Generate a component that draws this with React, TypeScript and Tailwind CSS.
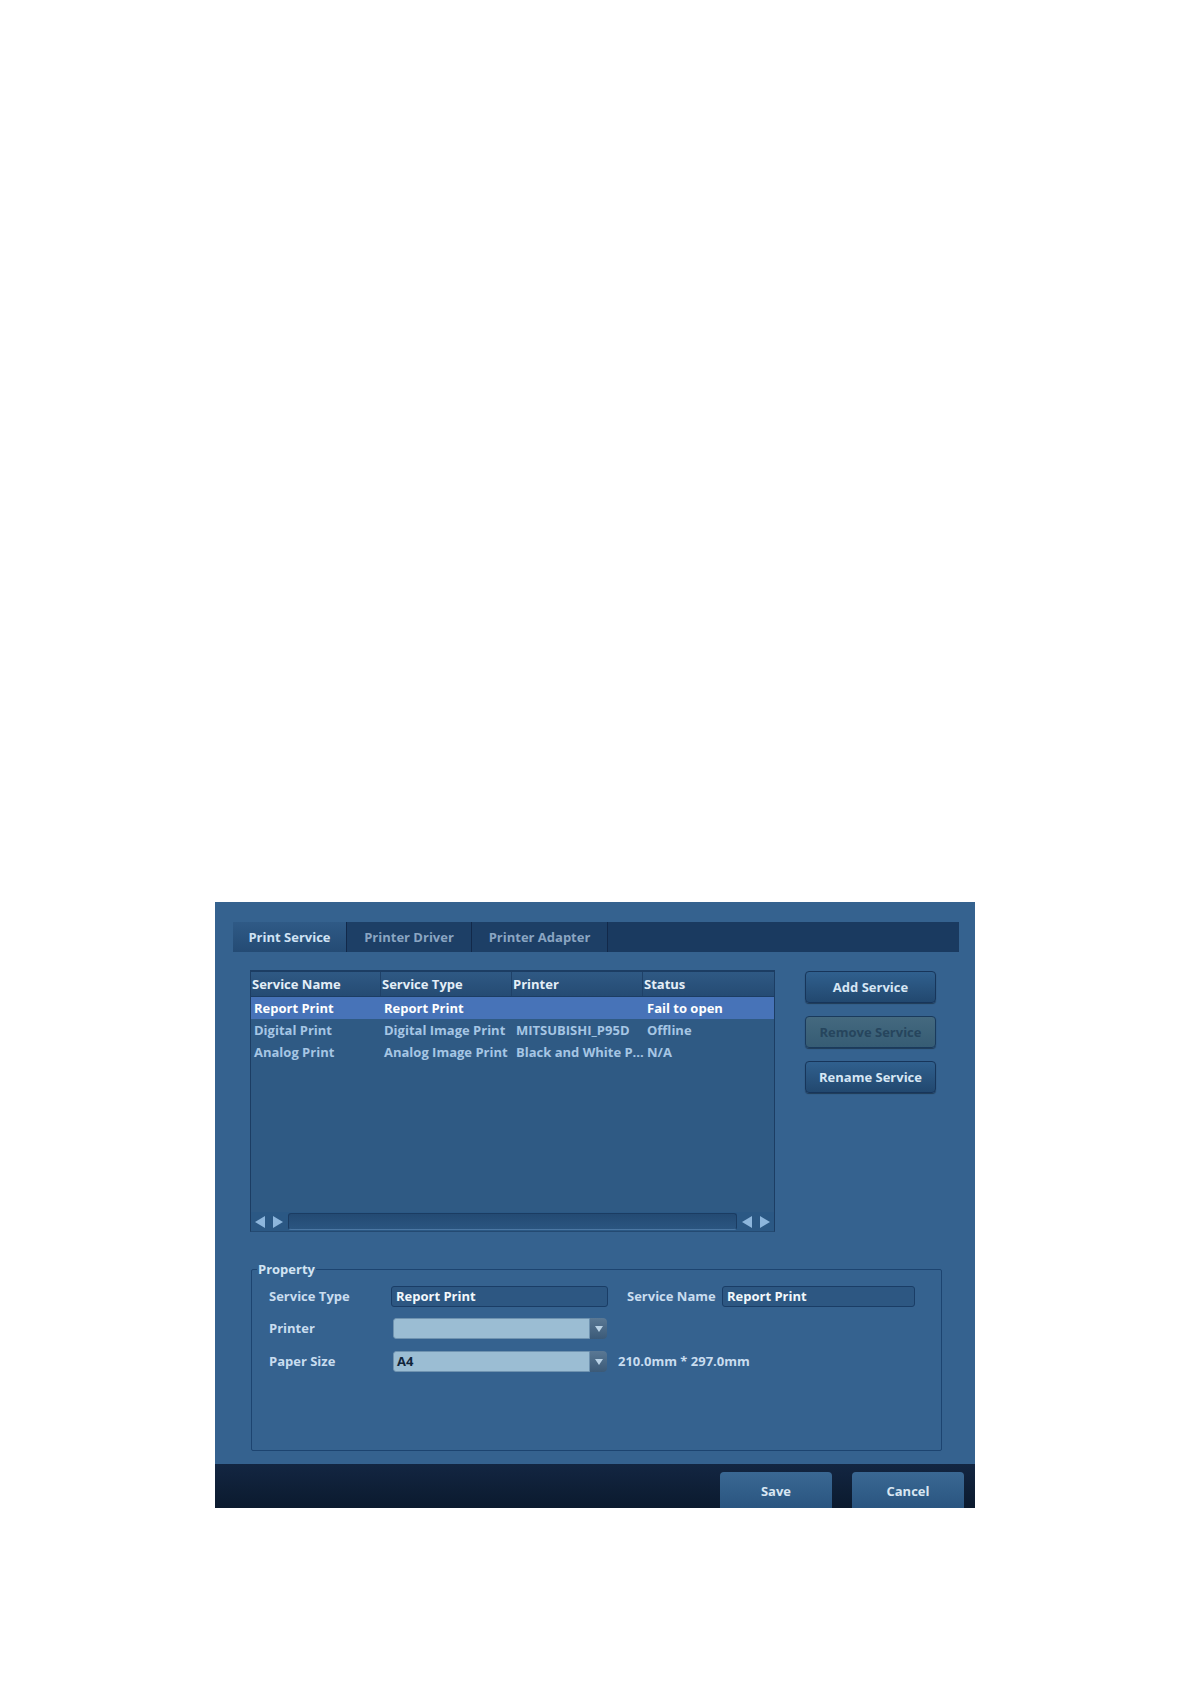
import React from "react";

const rows = [
  { name: "Report Print", type: "Report Print", printer: "", status: "Fail to open", selected: true },
  { name: "Digital Print", type: "Digital Image Print", printer: "MITSUBISHI_P95D", status: "Offline", selected: false },
  { name: "Analog Print", type: "Analog Image Print", printer: "Black and White P...", status: "N/A", selected: false },
];

const cols = ["w-[130px]", "w-[131px]", "w-[131px]", "flex-1"];

function ArrowPair() {
  return (
    <div className="flex items-center gap-[8px] px-[4px] h-full bg-[#2b5884]">
      <svg width="10" height="12" viewBox="0 0 10 12">
        <path d="M10 0 L0 6 L10 12 Z" fill="#8db6dc" />
      </svg>
      <svg width="10" height="12" viewBox="0 0 10 12">
        <path d="M0 0 L10 6 L0 12 Z" fill="#8db6dc" />
      </svg>
    </div>
  );
}

function ComboBox({ value }: { value: string }) {
  return (
    <div className="flex ml-[2px] w-[214px] h-[21px] rounded-[3px] overflow-hidden">
      <div className="flex-1 bg-[#9bbdd3] flex items-center pl-[3px] text-[#10243a] text-[13px] font-bold border border-[#6f93b0] rounded-l-[3px]">
        {value}
      </div>
      <div className="w-[17px] flex items-center justify-center bg-gradient-to-b from-[#5a7894] to-[#3b5a78] rounded-r-[4px]">
        <svg width="8" height="6" viewBox="0 0 8 6">
          <path d="M0 0 L8 0 L4 6 Z" fill="#b9d2e6" />
        </svg>
      </div>
    </div>
  );
}

function SideButton({ label, disabled }: { label: string; disabled?: boolean }) {
  return (
    <button
      className={
        disabled
          ? "w-[131px] h-[32px] pt-[1px] rounded-[4px] border border-[#1a3a5c] bg-gradient-to-b from-[#44697f] to-[#365c74] text-[#26455d] text-[13px] font-bold shadow-[0_1px_1px_rgba(0,0,0,0.4)]"
          : "w-[131px] h-[32px] pt-[1px] rounded-[4px] border border-[#17355a] bg-gradient-to-b from-[#30608e] to-[#22486f] text-[#d6e6f4] text-[13px] font-bold shadow-[0_1px_1px_rgba(0,0,0,0.4)]"
      }
    >
      {label}
    </button>
  );
}

export default function App() {
  return (
    <div className="min-h-screen bg-white pt-[902px] pl-[215px] font-['Open_Sans','Noto_Sans',sans-serif]">
      <div className="w-[760px] bg-[#35628f] flex flex-col">
        {/* Body */}
        <div className="h-[562px] pt-[20px] pl-[18px] pr-[16px]">
          {/* Tabs */}
          <div className="h-[30px] bg-[#1a3a60] flex">
            <div className="w-[114px] flex items-center justify-center pt-[1px] bg-gradient-to-b from-[#2f5a86] to-[#244b74] text-[#cfe2f4] text-[13px] font-bold border-r border-[#12294a]">
              Print Service
            </div>
            <div className="w-[125px] flex items-center justify-center pt-[1px] bg-[#1d3f66] text-[#8aa5c2] text-[13px] font-bold border-r border-[#12294a]">
              Printer Driver
            </div>
            <div className="w-[136px] flex items-center justify-center pt-[1px] bg-[#1d3f66] text-[#8aa5c2] text-[13px] font-bold border-r border-[#12294a]">
              Printer Adapter
            </div>
          </div>

          {/* Table + buttons */}
          <div className="mt-[18px] pl-[17px] flex gap-[30px]">
            <div className="w-[525px] h-[262px] flex flex-col">
              <div className="flex-1 flex flex-col border-t-2 border-x border-[#1c3d63] bg-[#2f5a84]">
                <div className="h-[25px] flex bg-gradient-to-b from-[#2f5984] to-[#254b73] border-b border-[#1c3d63] text-[#e4eef7] text-[13px] font-bold">
                  {["Service Name", "Service Type", "Printer", "Status"].map((h, i) => (
                    <div key={h} className={`${cols[i]} flex items-center pl-[1px] pt-[1px] ${i < 3 ? "border-r border-[#1f4168]" : ""}`}>
                      {h}
                    </div>
                  ))}
                </div>
                {rows.map((r) => (
                  <div
                    key={r.name}
                    className={`h-[22px] pt-[1px] flex items-center text-[13px] font-bold ${
                      r.selected ? "bg-[#4773b8] text-white" : "text-[#a6c6e4]"
                    }`}
                  >
                    <div className={`${cols[0]} pl-[3px] whitespace-nowrap`}>{r.name}</div>
                    <div className={`${cols[1]} pl-[3px] whitespace-nowrap`}>{r.type}</div>
                    <div className={`${cols[2]} pl-[4px] whitespace-nowrap`}>{r.printer}</div>
                    <div className={`${cols[3]} pl-[4px] whitespace-nowrap`}>{r.status}</div>
                  </div>
                ))}
              </div>
              {/* Scroll bar */}
              <div className="h-[20px] flex items-stretch bg-[#2b5884] border-x border-[#1c3d63] border-b border-b-[#244a72]">
                <ArrowPair />
                <div className="flex-1 mx-[1px] my-[1px] rounded-[3px] bg-gradient-to-b from-[#234a73] to-[#2b5580] border border-[#1b3c62] border-b-[#4b77a3]" />
                <ArrowPair />
              </div>
            </div>

            <div className="flex flex-col gap-[13px] pt-[1px]">
              <SideButton label="Add Service" />
              <SideButton label="Remove Service" disabled />
              <SideButton label="Rename Service" />
            </div>
          </div>

          {/* Property */}
          <fieldset className="mt-[29px] ml-[18px] w-[691px] h-[190px] border border-[#1d4470] rounded-[2px]">
            <legend className="ml-[5px] px-[1px] text-[13px] font-bold text-[#d2e4f3] leading-[16px]">Property</legend>
            <div className="pl-[17px] pt-[9px]">
              <div className="flex items-center h-[21px]">
                <div className="w-[122px] text-[13px] font-bold text-[#c9ddef]">Service Type</div>
                <div className="w-[217px] h-[21px] rounded-[3px] bg-[#2d5782] border border-[#1a3d66] flex items-center pl-[4px] text-[13px] font-bold text-[#f2f7fb]">
                  Report Print
                </div>
                <div className="w-[114px] pl-[19px] text-[13px] font-bold text-[#c9ddef] whitespace-nowrap">Service Name</div>
                <div className="w-[193px] h-[21px] rounded-[3px] bg-[#2d5782] border border-[#1a3d66] flex items-center pl-[4px] text-[13px] font-bold text-[#f2f7fb]">
                  Report Print
                </div>
              </div>
              <div className="flex items-center h-[21px] mt-[11px]">
                <div className="w-[122px] text-[13px] font-bold text-[#c9ddef]">Printer</div>
                <ComboBox value="" />
              </div>
              <div className="flex items-center h-[21px] mt-[12px]">
                <div className="w-[122px] text-[13px] font-bold text-[#c9ddef]">Paper Size</div>
                <ComboBox value="A4" />
                <div className="ml-[11px] text-[13px] font-bold text-[#c9ddef]">210.0mm * 297.0mm</div>
              </div>
            </div>
          </fieldset>
        </div>

        {/* Footer */}
        <div className="h-[44px] bg-gradient-to-b from-[#132642] to-[#0b1a2e] flex justify-end items-end gap-[20px] pr-[11px]">
          <button className="w-[112px] h-[36px] pt-[4px] rounded-t-[4px] bg-gradient-to-b from-[#3a6893] to-[#2a5580] text-[#d8e6f2] text-[13px] font-bold">
            Save
          </button>
          <button className="w-[112px] h-[36px] pt-[4px] rounded-t-[4px] bg-gradient-to-b from-[#3a6893] to-[#2a5580] text-[#d8e6f2] text-[13px] font-bold">
            Cancel
          </button>
        </div>
      </div>
    </div>
  );
}
